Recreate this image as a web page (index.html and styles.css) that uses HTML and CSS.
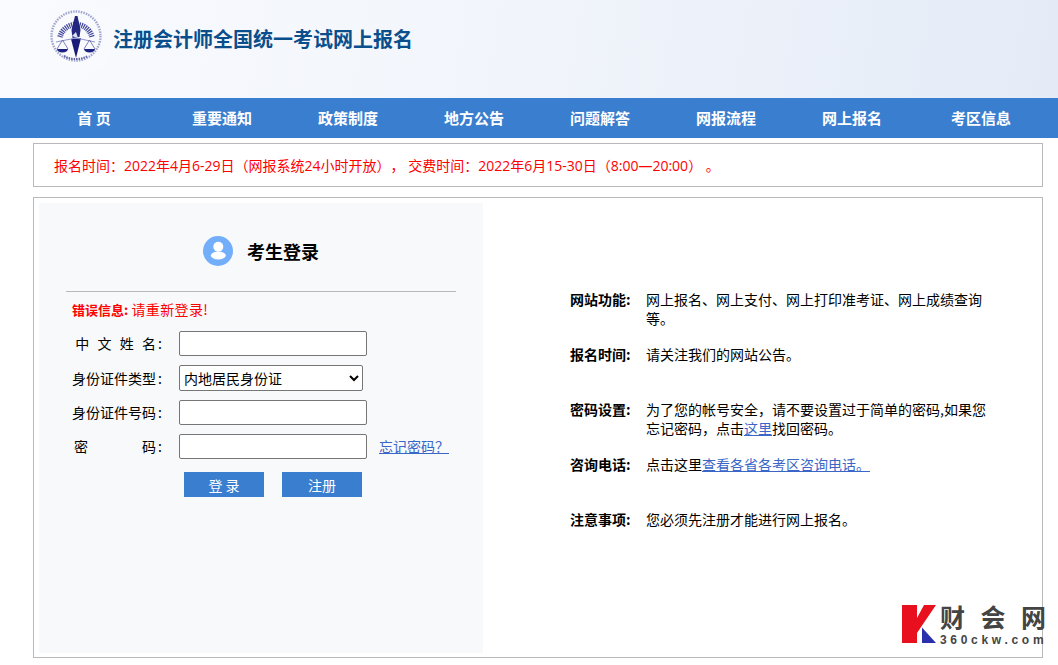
FILE: index.html
```html
<!DOCTYPE html>
<html lang="zh-CN">
<head>
<meta charset="utf-8">
<title>注册会计师全国统一考试网上报名</title>
<link rel="stylesheet" href="styles.css">
</head>
<body>
<header class="header">
  <svg class="logo" viewBox="0 0 60 60" aria-hidden="true">
    <rect width="60" height="60" fill="#f9fafd"/>
    <circle cx="29" cy="28" r="24.500" fill="none" stroke="#8f95c6" stroke-width="2.400" stroke-dasharray="1.500 1.100" opacity=".85"/>
    <path d="M13 29a16.500 16.500 0 0 1 32 0" fill="none" stroke="#2f3490" stroke-width="5.500" stroke-dasharray="1.200 .9" opacity=".9"/>
    <path d="M28 8l2.500 0 3 14-1 7-7 1-1-8z" fill="#23277f"/>
    <path d="M25 28l4-4 2 6z" fill="#dfe2f4"/>
    <path d="M24 31l10-1-5 20z" fill="#181c78"/>
    <path d="M9 34l20-4 19 4" fill="none" stroke="#9094c8" stroke-width="1"/>
    <path d="M15.500 32l-5.500 9M15.500 32l5.500 9M42.500 32l-5.500 9M42.500 32l5.500 9" fill="none" stroke="#5c62ac" stroke-width=".8"/>
    <path d="M10 41h11a5.500 3.500 0 0 1-11 0zM37 41h11a5.500 3.500 0 0 1-11 0z" fill="#1c2080"/>
    <path d="M17 48q12 6 24 0" fill="none" stroke="#5a5f9f" stroke-width="2" stroke-dasharray="1.500 1"/>
  </svg>
  <h1 class="site-title">注册会计师全国统一考试网上报名</h1>
</header>
<nav class="nav">
  <a class="nav-item nav-first">首 页</a>
  <a class="nav-item">重要通知</a>
  <a class="nav-item">政策制度</a>
  <a class="nav-item">地方公告</a>
  <a class="nav-item">问题解答</a>
  <a class="nav-item">网报流程</a>
  <a class="nav-item">网上报名</a>
  <a class="nav-item nav-last">考区信息</a>
</nav>
<p class="notice">报名时间：2022年4月6-29日（网报系统24小时开放）， 交费时间：2022年6月15-30日（8:00—20:00） 。</p>
<main class="main">
  <section class="login">
    <div class="login-head">
      <svg class="avatar" viewBox="0 0 30 30" aria-hidden="true">
        <circle cx="15" cy="15" r="15" fill="#73aefa"/>
        <circle cx="15.300" cy="10.700" r="5" fill="#fff"/>
        <ellipse cx="15.300" cy="19.500" rx="7.500" ry="4" fill="#fff"/>
      </svg>
      <h2 class="login-title">考生登录</h2>
    </div>
    <div class="error"><b class="error-key">错误信息:</b> <span class="error-msg">请重新登录!</span></div>
    <form class="form">
      <label class="label"><span class="sp-8">中文姓</span>名<span class="colon">:</span></label>
      <input class="input" type="text">
      <span></span>
      <label class="label">身份证件类型<span class="colon">:</span></label>
      <select class="select"><option>内地居民身份证</option></select>
      <span></span>
      <label class="label">身份证件号码<span class="colon">:</span></label>
      <input class="input" type="text">
      <span></span>
      <label class="label"><span class="sp-54">密</span>码<span class="colon">:</span></label>
      <input class="input" type="password">
      <a class="link forgot">忘记密码？</a>
    </form>
    <div class="buttons">
      <button class="btn" type="button">登 录</button>
      <button class="btn" type="button">注册</button>
    </div>
  </section>
  <section class="info">
    <div class="row"><b>网站功能:</b><p>网上报名、网上支付、网上打印准考证、网上成绩查询等。</p></div>
    <div class="row"><b>报名时间:</b><p>请关注我们的网站公告。</p></div>
    <div class="row"><b>密码设置:</b><p>为了您的帐号安全，请不要设置过于简单的密码,如果您忘记密码，点击<a class="link">这里</a>找回密码。</p></div>
    <div class="row"><b>咨询电话:</b><p>点击这里<a class="link">查看各省各考区咨询电话。</a></p></div>
    <div class="row"><b>注意事项:</b><p>您必须先注册才能进行网上报名。</p></div>
  </section>
</main>
<aside class="mark">
  <svg class="mark-k" viewBox="0 0 34 38" aria-hidden="true">
    <path d="M0 0H15V13L22 0H34L19 22 15 28V38H0Z" fill="#e8101f"/>
    <path d="M20 22.500L34 38H20Z" fill="#2b2fae"/>
  </svg>
  <div class="mark-text">
    <div class="mark-cn"><span>财</span><span>会</span><span>网</span></div>
    <div class="mark-en">360ckw.com</div>
  </div>
</aside>
</body>
</html>
```
FILE: styles.css
```css
* { box-sizing: border-box; }
html, body { margin: 0; height: 665px; overflow: hidden; }
body {
  position: relative;
  background: #fff;
  color: #000;
  font: 14px/20px "Noto Sans CJK SC", "Liberation Sans", sans-serif;
  text-spacing-trim: space-all;
}
.header {
  height: 98px;
  display: flex;
  align-items: flex-start;
  padding: 8px 0 0 47px;
  background: linear-gradient(100deg, #f9fbfe 0%, #f2f5fb 45%, #e4ebf7 100%);
}
.logo { width: 60px; height: 60px; flex: none; }
.site-title {
  margin: 17px 0 0 6px;
  font-size: 20px;
  line-height: 28px;
  font-weight: 700;
  color: #0a4f8c;
}
.nav {
  height: 40px;
  display: flex;
  padding-left: 29px;
  background: #3a7ecf;
}
.nav-item {
  width: 126px;
  text-align: center;
  font-size: 15px;
  line-height: 40px;
  font-weight: 700;
  color: #fff;
}
.nav-first { width: 130px; }
.nav-last { width: 132px; }
.notice {
  margin: 5px 15px 0 33px;
  height: 44px;
  padding-left: 20px;
  line-height: 43px;
  border: 1px solid #b9b9b9;
  color: #f00;
  font-family: "Open Sans", "Noto Sans CJK SC", sans-serif;
}
.main {
  margin: 10px 15px 0 33px;
  height: 461px;
  padding: 5px;
  display: flex;
  border: 1px solid #b9b9b9;
}
.login {
  width: 444px;
  height: 450px;
  flex: none;
  padding: 0 27px;
  background: #f7f9fb;
}
.login-head {
  height: 89px;
  display: flex;
  align-items: center;
  justify-content: center;
  gap: 14px;
  padding: 8px 0 0;
  border-bottom: 1px solid #b9b9b9;
}
.avatar { width: 30px; height: 30px; }
.login-title { margin: 0; font-size: 18px; line-height: 28px; font-weight: 700; }
.error { margin: 7px 0 0 6px; color: #f00; white-space: nowrap; }
.error-key { font-size: 13px; }
.error-msg { letter-spacing: .4px; }
.form {
  display: grid;
  grid-template-columns: 90px 188px auto;
  column-gap: 17px;
  row-gap: 9px;
  margin: 11px 0 0 6px;
  align-items: center;
}
.label { display: block; text-align: right; line-height: 25px; white-space: nowrap; }
.colon { padding-left: 2px; }
.sp-8 { letter-spacing: 8.300px; }
.sp-54 { letter-spacing: 54px; }
.input {
  width: 188px;
  height: 25px;
  padding: 0 4px;
  background: #fff;
  border: 1px solid #767676;
  border-radius: 2px;
}
.select {
  width: 184px;
  height: 26px;
  padding: 0;
  background: #fff;
  border: 1px solid #767676;
  border-radius: 2px;
  color: #000;
  font: inherit;
}
.link { color: #3a66c8; text-decoration: underline; }
.forgot { margin: 0 0 2px -5px; white-space: nowrap; }
.buttons { display: flex; gap: 18px; margin: 13px 0 0 118px; }
.btn {
  width: 80px;
  height: 25px;
  padding: 0;
  background: #3a7ecf;
  border: 0;
  color: #fff;
  font: inherit;
}
.info { padding: 87px 0 0 87px; width: 430px; }
.row { display: flex; gap: 15px; width: 420px; height: 55px; }
.row b { flex: none; width: 61px; line-height: 19px; white-space: nowrap; }
.row p { margin: 0; width: 340px; line-height: 19px; }
.mark {
  position: absolute;
  left: 902px;
  top: 605px;
  display: flex;
  gap: 4px;
}
.mark-k { width: 34px; height: 38px; }
.mark-cn {
  display: flex;
  gap: 15.500px;
  height: 26px;
  font-size: 25px;
  line-height: 23px;
  font-weight: 700;
  color: #444;
}
.mark-en {
  margin-top: 2px;
  font: 700 12px/14px "Liberation Sans", sans-serif;
  letter-spacing: 3.700px;
  color: #444;
  white-space: nowrap;
}
```
